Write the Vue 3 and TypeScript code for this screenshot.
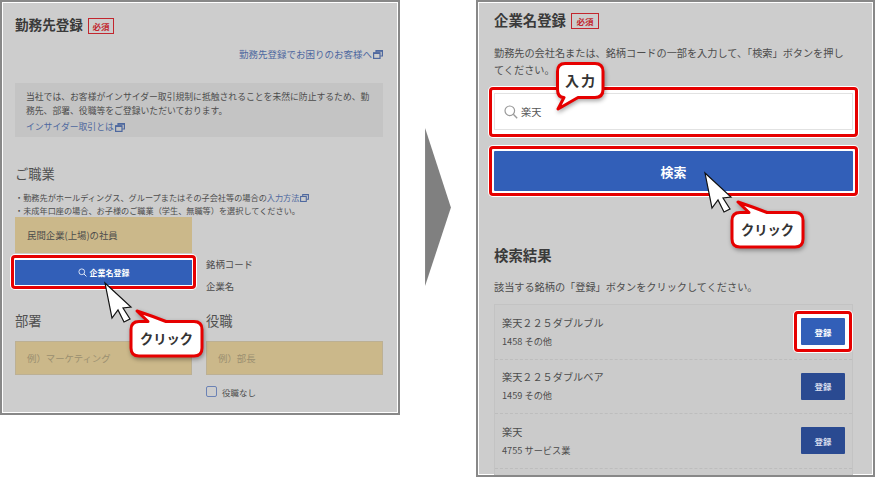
<script setup lang="ts">
interface Row { name: string; sub: string; active: boolean }
const rows: Row[] = [
  { name: '楽天２２５ダブルブル', sub: '1458 その他', active: true },
  { name: '楽天２２５ダブルベア', sub: '1459 その他', active: false },
  { name: '楽天', sub: '4755 サービス業', active: false },
]
const clickBubble = 'M11 13.5 L20 13.5 L9 3 Q24 8 38 13.5 L66 13.5 Q74 13.5 74 21.5 L74 40 Q74 48 66 48 L11 48 Q3 48 3 40 L3 21.5 Q3 13.5 11 13.5 Z'
const inputBubble = 'M11 3.5 L41 3.5 Q49 3.5 49 11.5 L49 29.5 Q49 37.5 41 37.5 L24 37.5 L4 49 L10 37.5 Q3.5 37.5 3.5 29.5 L3.5 11.5 Q3.5 3.5 11 3.5 Z'
const cursorPts = '2,2 9,37 15,29 21,41 27,38 20,27 28,26'
</script>

<template>
  <div class="page">
    <section class="panel panel-left">
      <div class="title-row">
        <h2 class="title">勤務先登録</h2>
        <span class="badge">必須</span>
      </div>
      <div class="help-link">
        <a class="link">勤務先登録でお困りのお客様へ</a>
        <svg class="ext" viewBox="0 0 10 9"><path d="M3 2.5V.7H9.4V6H7.2" fill="none" stroke="#4e689f" stroke-width="1.2"/><rect x=".6" y="2.8" width="6.4" height="5.6" fill="none" stroke="#4e689f" stroke-width="1.2"/><path d="M.6 3.2H7M3 1H9.4" stroke="#4e689f" stroke-width="1.4"/></svg>
      </div>
      <div class="note">
        <p class="note-text">当社では、お客様がインサイダー取引規制に抵触されることを未然に防止するため、勤務先、部署、役職等をご登録いただいております。</p>
        <div class="note-link">
          <a class="link">インサイダー取引とは</a>
          <svg class="ext" viewBox="0 0 10 9"><path d="M3 2.5V.7H9.4V6H7.2" fill="none" stroke="#4e689f" stroke-width="1.2"/><rect x=".6" y="2.8" width="6.4" height="5.6" fill="none" stroke="#4e689f" stroke-width="1.2"/><path d="M.6 3.2H7M3 1H9.4" stroke="#4e689f" stroke-width="1.4"/></svg>
        </div>
      </div>
      <h3 class="sub-heading job">ご職業</h3>
      <ul class="bullets">
        <li>・勤務先がホールディングス、グループまたはその子会社等の場合の<a class="link">入力方法</a><svg class="ext small" viewBox="0 0 10 9"><path d="M3 2.5V.7H9.4V6H7.2" fill="none" stroke="#4e689f" stroke-width="1.2"/><rect x=".6" y="2.8" width="6.4" height="5.6" fill="none" stroke="#4e689f" stroke-width="1.2"/></svg></li>
        <li>・未成年口座の場合、お子様のご職業（学生、無職等）を選択してください。</li>
      </ul>
      <div class="form-grid">
        <div class="field select">民間企業(上場)の社員</div>
        <div></div>
        <div class="hl hl-company">
          <button class="btn-company">
            <svg class="btn-icon" viewBox="0 0 10 10"><circle cx="4.2" cy="4.2" r="3.2" fill="none" stroke="#e8eefa" stroke-width="1"/><path d="M6.6 6.6 9.4 9.4" stroke="#e8eefa" stroke-width="1.1"/></svg>
            企業名登録
          </button>
        </div>
        <div class="labels">
          <div>銘柄コード</div>
          <div>企業名</div>
        </div>
        <h3 class="sub-heading">部署</h3>
        <h3 class="sub-heading">役職</h3>
        <div class="field input">例）マーケティング</div>
        <div class="field input">例）部長</div>
        <div></div>
        <div class="check-row">
          <span class="check"></span>
          <span>役職なし</span>
        </div>
      </div>
    </section>

    <svg class="big-arrow" viewBox="0 0 26 160"><polygon points="0,0 26,80 0,159" fill="#808080"/></svg>

    <section class="panel panel-right">
      <div class="title-row">
        <h2 class="title title-r">企業名登録</h2>
        <span class="badge badge-r">必須</span>
      </div>
      <p class="desc desc-top">勤務先の会社名または、銘柄コードの一部を入力して、「検索」ボタンを押してください。</p>
      <div class="hl hl-wide hl-input">
        <div class="search-box">
          <svg class="search-icon" viewBox="0 0 14 14"><circle cx="5.8" cy="5.8" r="4.8" fill="none" stroke="#9a9a9a" stroke-width="1.2"/><path d="M9.3 9.3 13.2 13.2" stroke="#9a9a9a" stroke-width="1.4"/></svg>
          <span>楽天</span>
        </div>
      </div>
      <div class="hl hl-wide hl-search">
        <button class="btn-search">検索</button>
      </div>
      <h2 class="title title-r result-title">検索結果</h2>
      <p class="desc desc-result">該当する銘柄の「登録」ボタンをクリックしてください。</p>
      <div class="list">
        <div v-for="row in rows" :key="row.name" class="row">
          <div>
            <div class="row-name">{{ row.name }}</div>
            <div class="row-sub">{{ row.sub }}</div>
          </div>
          <div :class="['reg-wrap', { 'hl': row.active, 'hl-reg': row.active }]">
            <button :class="['btn-reg', { active: row.active }]">登録</button>
          </div>
        </div>
      </div>
    </section>

    <svg class="cursor cursor-left" viewBox="0 0 30 44"><polygon :points="cursorPts" fill="#fff" stroke="#111" stroke-width="1.2" stroke-linejoin="miter"/></svg>
    <svg class="cursor cursor-right" viewBox="0 0 30 44"><polygon :points="cursorPts" fill="#fff" stroke="#111" stroke-width="1.2" stroke-linejoin="miter"/></svg>

    <svg class="bubble bubble-click-left" viewBox="0 0 80 54">
      <path :d="clickBubble" class="bubble-shape"/>
      <text x="38.5" y="36" class="bubble-text">クリック</text>
    </svg>
    <svg class="bubble bubble-click-right" viewBox="0 0 80 54">
      <path :d="clickBubble" class="bubble-shape"/>
      <text x="38.5" y="36" class="bubble-text">クリック</text>
    </svg>
    <svg class="bubble bubble-input" viewBox="0 0 54 54">
      <path :d="inputBubble" class="bubble-shape"/>
      <text x="27" y="26" class="bubble-text spaced">入力</text>
    </svg>
  </div>
</template>

<style>
html, body { margin: 0; background: #fff; }
</style>

<style scoped>
* { box-sizing: border-box; }
.page {
  position: relative;
  width: 876px;
  height: 478px;
  display: flex;
  align-items: flex-start;
  overflow: hidden;
  background: #fff;
  font-family: "Noto Sans CJK JP", "Noto Sans", sans-serif;
  color: #4c4c4c;
}
.panel {
  flex: none;
  border: 2px solid #888;
  background: #cdcdcd;
  box-shadow: inset 0 0 0 1px #fff;
  overflow: hidden;
}
.panel-left { width: 400px; height: 415px; padding: 12px 15px 0 13px; }
.panel-right { width: 399px; height: 477px; padding: 8px 20px 0 16px; }
.big-arrow { flex: none; width: 26px; height: 159px; margin: 128px 25px 0; }
.title-row { display: flex; align-items: center; height: 20px; }
.title { margin: 0; font-size: 13.6px; line-height: 20px; font-weight: 700; color: #3a3a3a; }
.title-r { font-size: 14.4px; }
.badge {
  margin: 4px 0 0 5px;
  width: 26px; height: 16px;
  border: 1px solid #c2262e;
  color: #c2262e;
  font-size: 8.5px; line-height: 14px; font-weight: 700;
  text-align: center;
}
.badge-r { width: 28px; margin-left: 5px; margin-top: 2px; }
.link { color: #4e689f; text-decoration: none; }
.ext { width: 10px; height: 9px; margin-left: 1px; flex: none; }
.ext.small { width: 9px; height: 8px; vertical-align: -1px; }
.help-link {
  display: flex; justify-content: flex-end; align-items: center;
  margin-top: 13px; height: 14px; font-size: 9.5px; line-height: 14px;
}
.note { margin-top: 22px; height: 54px; padding: 7px 11px 3px; background: #c4c4c4; font-size: 8.82px; line-height: 14px; }
.note-text { margin: 0; }
.note-link { display: flex; align-items: center; margin-top: 2px; height: 14px; }
.sub-heading { margin: 0; font-size: 13.3px; line-height: 20px; font-weight: 400; color: #505050; }
.job { margin-top: 27px; }
.bullets { list-style: none; margin: 7px 0 0; padding: 0; font-size: 8.17px; line-height: 13px; white-space: nowrap; }
.form-grid { display: grid; grid-template-columns: 177px 177px; column-gap: 14px; }
.field {
  display: flex; align-items: center;
  padding-left: 11px;
  background: #cbb88a;
  border: 1px solid #bcb094;
  font-size: 9.4px;
}
.select { height: 36px; color: #4c4c4c; border-color: #cbb88a; }
.input { height: 34px; margin-top: 10px; color: #9a8f70; }
.hl {
  position: relative;
  z-index: 1;
  border: 3px solid #e60000;
  border-radius: 4px;
  background: #fff;
  box-shadow: 0 0 0 1px #fff;
}
.hl-company { margin: 2px -4px -4px; padding: 2px 1px 1px; height: 34px; }
.btn-company {
  display: flex; align-items: center; justify-content: center; gap: 3px;
  width: 100%; height: 25px;
  border: 0; padding: 0;
  background: #325fb8; color: #fff;
  font: 700 8px/1 "Noto Sans CJK JP", sans-serif;
}
.btn-icon { width: 9px; height: 9px; }
.labels { font-size: 9.4px; line-height: 14px; height: 36px; margin-top: 4px; display: flex; flex-direction: column; gap: 8px; }
.form-grid .sub-heading { margin-top: 18px; }
.check-row { display: flex; align-items: center; gap: 5px; margin-top: 11px; height: 11px; font-size: 8.5px; }
.check { width: 11px; height: 11px; border: 1px solid #6b82b5; border-radius: 2px; }
.desc { margin: 0; font-size: 10.17px; line-height: 17px; color: #4c4c4c; }
.desc-top { margin-top: 14px; }
.hl-wide { margin: 0 -5px; padding: 2px; }
.hl-input { margin-top: 9px; margin-bottom: -7px; padding: 3px 2px 4px; }
.hl-search { margin-top: 16px; margin-bottom: -5px; }
.search-box {
  display: flex; align-items: center; gap: 3px;
  height: 37px; padding-left: 9px;
  background: #fff; border: 1px solid #e2e2e2;
  font-size: 10.2px; color: #555;
}
.search-icon { width: 14px; height: 14px; }
.btn-search {
  display: block; width: 100%; height: 40px;
  border: 0; border-radius: 1px;
  background: #325fb8; color: #fff;
  font: 700 13px/1 "Noto Sans CJK JP", sans-serif;
}
.result-title { margin-top: 54px; }
.desc-result { margin-top: 13px; }
.list { margin-top: 9px; padding-bottom: 20px; background: #cbcbcb; border: 1px solid #c3c3c3; }
.row {
  display: flex; justify-content: space-between; align-items: center;
  height: 54.5px;
  padding: 0 7px 0 7px;
  border-bottom: 1px dashed #bdbdbd;
}
.row-name { font-size: 10.17px; line-height: 14px; }
.row-sub { margin-top: 4px; font-size: 9.2px; line-height: 14px; }
.reg-wrap { flex: none; line-height: 0; }
.hl-reg { margin: -7px; padding: 4px; }
.btn-reg {
  display: block; width: 44px; height: 27px;
  border: 0; border-radius: 1px; padding: 0;
  background: #2a4a91; color: #d8deee;
  font: 700 8.5px/1 "Noto Sans CJK JP", sans-serif;
}
.btn-reg.active { background: #325fb8; color: #fff; }
.cursor { position: absolute; width: 30px; height: 44px; z-index: 2; }
.cursor-left { left: 103px; top: 281px; }
.cursor-right { left: 703px; top: 171px; }
.bubble { position: absolute; z-index: 3; overflow: visible; }
.bubble-click-left { left: 128px; top: 308px; width: 80px; height: 54px; }
.bubble-click-right { left: 729px; top: 199px; width: 80px; height: 54px; }
.bubble-input { left: 554px; top: 60px; width: 54px; height: 54px; }
.bubble-shape {
  fill: #fff; stroke: #e60000; stroke-width: 3; stroke-linejoin: round;
  filter: drop-shadow(1px 2px 2px rgba(0, 0, 0, .35));
}
.bubble-text { fill: #333; font-size: 13.3px; font-weight: 700; text-anchor: middle; font-family: "Noto Sans CJK JP", sans-serif; }
.spaced { font-size: 14px; letter-spacing: 2px; }
</style>
